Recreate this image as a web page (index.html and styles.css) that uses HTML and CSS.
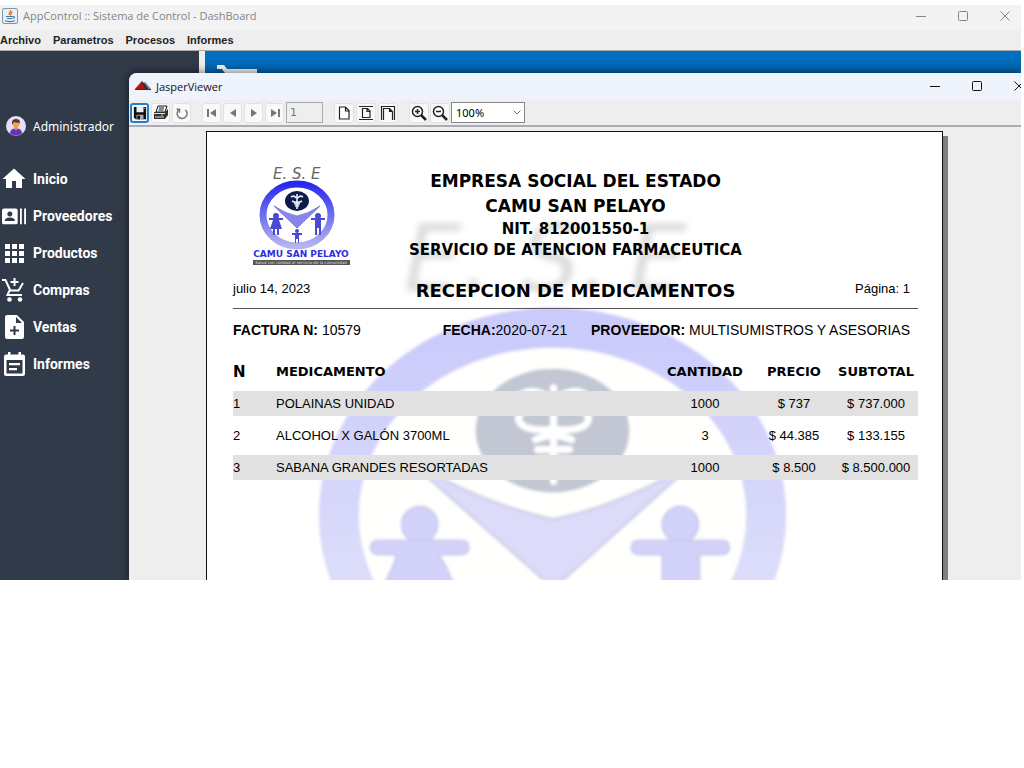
FILE: index.html
```html
<!DOCTYPE html>
<html lang="es">
<head>
<meta charset="utf-8">
<title>AppControl :: Sistema de Control - DashBoard</title>
<link rel="stylesheet" href="styles.css">
</head>
<body>
<div class="app">
  <header class="titlebar">
    <svg class="java-icon" viewBox="0 0 16 16" aria-hidden="true"><rect x=".5" y=".5" width="15" height="15" rx="1.5" fill="#e9f0f5" stroke="#7f98ab"/><path d="M8.500 2c1 2-2.500 2.500-1 5M10.500 4c-2 1-2.500 2-1.500 3.500" fill="none" stroke="#e8762c" stroke-width="1.400"/><path d="M4 8.500h7M5 10.500h5.500M3 12.800q5 1.500 10 0M11 8.500q2.500 0 .5 2" fill="none" stroke="#41789f" stroke-width="1.200"/></svg>
    <h1 class="titlebar-text">AppControl :: Sistema de Control - DashBoard</h1>
    <div class="window-buttons">
      <button aria-label="Minimizar"><svg viewBox="0 0 10 10"><path d="M0 5.500h10"/></svg></button>
      <button aria-label="Maximizar"><svg viewBox="0 0 10 10"><rect x=".5" y=".5" width="9" height="9" rx="1"/></svg></button>
      <button aria-label="Cerrar"><svg viewBox="0 0 10 10"><path d="M.5.5l9 9M9.500.5l-9 9"/></svg></button>
    </div>
  </header>
  <nav class="menubar">
    <button>Archivo</button><button>Parametros</button><button>Procesos</button><button>Informes</button>
  </nav>
  <div class="workspace">
    <div class="dashboard">
      <aside class="sidebar">
        <div class="user">
          <svg viewBox="0 0 20 20" aria-hidden="true"><circle cx="10" cy="10" r="10" fill="#e6dff5"/><path d="M4 17.500q0-5 6-5t6 5q-6 4.500-12 0" fill="#6236b5"/><path d="M8.500 11h3v2.500l-1.500 1-1.500-1z" fill="#e58a45"/><circle cx="10" cy="8" r="3.400" fill="#f7a24f"/><path d="M6 8q-.5-5 4-5t4 5l-1-1.500q-3 .5-5-.8L7 8z" fill="#473a3a"/></svg>
          <span>Administrador</span>
        </div>
        <a href="#inicio"><svg viewBox="0 0 24 24"><path d="M10 21v-7h4v7h6v-9h3.500L12 1.500.5 12H4v9z"/></svg>Inicio</a>
        <a href="#proveedores"><svg viewBox="0 0 26 24"><path fill-rule="evenodd" d="M2 4h13q2 0 2 2v13q0 2-2 2H2q-2 0-2-2V6q0-2 2-2zm6.500 3a2.800 2.800 0 1 0 .01 0zM3 17.500h11q0-4-5.500-4T3 17.500zM19.500 4h2v17h-2zM24 4h2v17h-2z"/></svg>Proveedores</a>
        <a href="#productos"><svg viewBox="0 0 24 24"><path d="M3 3h5v5H3zm7 0h5v5h-5zm7 0h5v5h-5zM3 10h5v5H3zm7 0h5v5h-5zm7 0h5v5h-5zM3 17h5v5H3zm7 0h5v5h-5zm7 0h5v5h-5z"/></svg>Productos</a>
        <a href="#compras"><svg viewBox="0 0 24 24"><path d="M0 2h3.500l4.800 10.500h8.300L21 5" fill="none" stroke="#fff" stroke-width="2"/><path d="M12.500 0v8M8.500 4h8M7.500 12.500l-2 4.500H20" fill="none" stroke="#fff" stroke-width="2"/><circle cx="7.500" cy="21.500" r="2.300"/><circle cx="18" cy="21.500" r="2.300"/></svg>Compras</a>
        <a href="#ventas"><svg viewBox="0 0 24 24"><path fill-rule="evenodd" d="M5 0h10l7 7v15q0 2-2 2H5q-2 0-2-2V2q0-2 2-2zm9 2v6h6zm-2.500 9v3.500H8v2h3.500V20h2v-3.500H17v-2h-3.500V11z"/></svg>Ventas</a>
        <a href="#informes"><svg viewBox="0 0 24 24"><path fill-rule="evenodd" d="M6 0h2.500v2.500h8V0H19v2.500h2q2 0 2 2V22q0 2-2 2H4q-2 0-2-2V4.500q0-2 2-2h2zM4.500 8v13.500h16V8zM7 11h11v2.300H7zm0 5h8v2.300H7z"/></svg>Informes</a>
      </aside>
      <main class="main-area">
        <svg class="main-cart" viewBox="0 0 40 9" aria-hidden="true"><path d="M0 2h6l3 4h29v3" fill="none" stroke="#f2f2f2" stroke-width="4"/></svg>
      </main>
    </div>

    <section class="viewer" aria-label="JasperViewer">
      <header class="viewer-title">
        <svg class="jasper-icon" viewBox="0 0 16 10" aria-hidden="true"><path d="M7 3l3-2 6 7H9z" fill="#777"/><path d="M0 8l6-7 5 7z" fill="#b41414"/><path d="M6 1l1-1 4 5 2 3h-2z" fill="#222"/><path d="M0 8.500h16" stroke="#333"/></svg>
        <h2>JasperViewer</h2>
        <div class="window-buttons">
          <button aria-label="Minimizar"><svg viewBox="0 0 10 10"><path d="M0 5.500h10"/></svg></button>
          <button aria-label="Maximizar"><svg viewBox="0 0 10 10"><rect x=".5" y=".5" width="9" height="9" rx="1"/></svg></button>
          <button aria-label="Cerrar"><svg viewBox="0 0 10 10"><path d="M.5.5l9 9M9.500.5l-9 9"/></svg></button>
        </div>
      </header>
      <div class="toolbar">
        <div class="tool-group">
          <button class="focused" aria-label="Guardar"><svg viewBox="0 0 16 16"><path d="M1 1h14v14H3l-2-2z" fill="#111"/><path d="M4 1h8v6H4z" fill="#eee"/><path d="M4 10h8v5H4z" fill="#aaa"/><path d="M5 11h3v4H5z" fill="#111"/><path d="M13 2h1v1h-1z" fill="#fff"/></svg></button>
          <button aria-label="Imprimir"><svg viewBox="0 0 16 16"><path d="M5 1h9l-2 6H3z" fill="#fff" stroke="#111"/><path d="M6 3h5M5.500 5h5" stroke="#111"/><path d="M1 7h11l3-3v6l-3 4H1z" fill="#333"/><path d="M1 8.500h11M2 12h9" stroke="#ddd"/><path d="M8 10h2" stroke="#dc3"/></svg></button>
          <button aria-label="Recargar"><svg viewBox="0 0 16 16"><path d="M5 4.500a5 5 0 1 0 6.500.3M2.500 4.200h3v3.500" fill="none" stroke="#777" stroke-width="1.500"/></svg></button>
        </div>
        <div class="tool-group">
          <button aria-label="Primera página"><svg viewBox="0 0 16 16"><path d="M3 4h2v8H3zM12 4v8L6 8z" fill="#777"/></svg></button>
          <button aria-label="Página anterior"><svg viewBox="0 0 16 16"><path d="M11 4v8L5 8z" fill="#777"/></svg></button>
          <button aria-label="Página siguiente"><svg viewBox="0 0 16 16"><path d="M5 4v8l6-4z" fill="#777"/></svg></button>
          <button aria-label="Última página"><svg viewBox="0 0 16 16"><path d="M11 4h2v8h-2zM4 4v8l6-4z" fill="#777"/></svg></button>
          <input class="page-number" type="text" value="1" aria-label="Número de página" disabled>
        </div>
        <div class="tool-group fit-group">
          <button aria-label="Tamaño real"><svg viewBox="0 0 16 16"><path d="M3.500 2h6l3.500 3.500V14H3.500zM9.500 2v4H13" fill="#fff" stroke="#222" stroke-width="1.200"/></svg></button>
          <button aria-label="Ajustar página"><svg viewBox="0 0 16 16"><path d="M1 1.500h14M1 14.500h14M4.500 3.500h5l2.500 2.500v6.500H4.500zM9 3.500v3h3" fill="none" stroke="#222" stroke-width="1.200"/></svg></button>
          <button aria-label="Ajustar ancho"><svg viewBox="0 0 16 16"><path d="M1.500 15V1.500h13V15M3.500 15V3.500h6l3 3V15M9.500 3.500v3h3" fill="none" stroke="#222" stroke-width="1.200"/></svg></button>
        </div>
        <div class="tool-group zoom-group">
          <button aria-label="Acercar"><svg viewBox="0 0 16 16"><circle cx="6.500" cy="6.500" r="5" fill="#fff" stroke="#222" stroke-width="1.500"/><path d="M4 6.500h5M6.500 4v5" stroke="#222" stroke-width="1.500"/><path d="M10 10l5 5" stroke="#222" stroke-width="2.500"/></svg></button>
          <button aria-label="Alejar"><svg viewBox="0 0 16 16"><circle cx="6.500" cy="6.500" r="5" fill="#fff" stroke="#222" stroke-width="1.500"/><path d="M4 6.500h5" stroke="#222" stroke-width="1.500"/><path d="M10 10l5 5" stroke="#222" stroke-width="2.500"/></svg></button>
          <span class="zoom-box">
            <select class="zoom-select" aria-label="Zoom"><option>100%</option><option>50%</option><option>200%</option></select>
            <svg class="zoom-arrow" viewBox="0 0 8 5" aria-hidden="true"><path d="M.5.5L4 4 7.500.5"/></svg>
          </span>
        </div>
      </div>

      <div class="canvas">
        <article class="paper">
          <svg class="watermark" viewBox="207 132 736 449" preserveAspectRatio="xMidYMin slice" aria-hidden="true">
            <defs>
              <linearGradient id="pale" x1="0" y1="308" x2="0" y2="720" gradientUnits="userSpaceOnUse"><stop offset="0" stop-color="#c9c9fb"/><stop offset="1" stop-color="#e6e6fa"/></linearGradient>
              <filter id="soft"><feGaussianBlur stdDeviation="1.500"/></filter>
              <filter id="softer"><feGaussianBlur stdDeviation="3"/></filter>
            </defs>
            <g class="watermark-letters" filter="url(#softer)"><text x="404" y="291">E.</text><text x="522" y="291">S.</text><text x="630" y="291">E</text></g>
            <g filter="url(#soft)">
              <ellipse cx="553" cy="516" rx="214" ry="188" fill="#fffffd" stroke="url(#pale)" stroke-width="40"/>
              <path d="M408 460q72 44 146 60 74-16 144-60L554 589z" fill="#dcdcfa" stroke="#d2d2ea" stroke-width="3"/>
              <ellipse cx="553" cy="431" rx="77" ry="62" fill="#c2c7d3"/>
              <g fill="none" stroke="#fff" stroke-width="7" stroke-linecap="round"><path d="M554 388v94"/><path d="M549 398q-14-10-26-4M559 398q14-10 26-4M551 430q-29 2-32-10 0-8 6-8M557 430q29 2 32-10 0-8-6-8M536 440q18-8 36 0M538 450h32M542 460h24"/></g>
              <g fill="#d2d2fa" stroke="#c9c9ee" stroke-width="2"><circle cx="420" cy="525" r="18"/><path d="M379 541h82q8 0 8 7t-8 7h-20q-3 0 4 10l12 26h-75l12-26q4-10 1-10h-16q-8 0-8-7t8-7z"/><circle cx="681" cy="525" r="18"/><path d="M640 541h82q8 0 8 7t-8 7h-22v40h-37v-40h-23q-8 0-8-7t8-7z"/></g>
            </g>
          </svg>
          <header class="report-head">
            <svg class="logo" viewBox="0 0 106 108" role="img" aria-label="E.S.E CAMU SAN PELAYO">
              <defs><linearGradient id="ring" x1="0" y1="0" x2="0" y2="1"><stop offset="0" stop-color="#2929ee"/><stop offset="1" stop-color="#b5b5ef"/></linearGradient></defs>
              <text class="logo-ese" x="25" y="19">E. S. E</text>
              <ellipse cx="49" cy="55" rx="34" ry="31" fill="#fff" stroke="url(#ring)" stroke-width="7"/>
              <path d="M26 46q12 8 23 10 11-2 23-10L49 68z" fill="#8686ee" stroke="#5b5bcc" stroke-width=".7"/>
              <ellipse cx="49" cy="41" rx="12" ry="10" fill="#0c1b4c"/>
              <path d="M49 34v15M43 37q3-2 5 1M55 37q-3-2-5 1M44 41q5 3 10 0M46 44h6M47 46h4" fill="none" stroke="#e8eef3" stroke-width="1.600"/>
              <g fill="#4949d5"><circle cx="28" cy="56" r="3"/><path d="M21 58h14v2h-4l3 9h-3v6h-2v-6h-2v6h-2v-6h-3l3-9h-4z"/><circle cx="70" cy="56" r="3"/><path d="M63 58h14v2h-4v15h-2v-7h-2v7h-2V60h-4z"/><circle cx="49" cy="71" r="2"/><path d="M44 73h10v2h-3v8h-1v-4h-2v4h-1v-8h-3z"/></g>
              <text class="logo-name" x="53" y="97">CAMU SAN PELAYO</text>
              <rect x="5" y="100" width="97" height="5" fill="#555"/>
              <text class="logo-motto" x="53" y="104">Salud con calidad al servicio de la comunidad</text>
            </svg>
            <div class="titles">
              <p class="title-large">EMPRESA SOCIAL DEL ESTADO</p>
              <p class="title-large">CAMU SAN PELAYO</p>
              <p class="title-small">NIT. 812001550-1</p>
              <p class="title-small">SERVICIO DE ATENCION FARMACEUTICA</p>
            </div>
          </header>
          <div class="report-sub">
            <span>julio 14, 2023</span>
            <h3>RECEPCION DE MEDICAMENTOS</h3>
            <span class="page-label">Página: 1</span>
          </div>
          <div class="invoice">
            <p><b>FACTURA N:</b> 10579</p>
            <p class="invoice-date"><b>FECHA:</b>2020-07-21</p>
            <p><b>PROVEEDOR:</b> MULTISUMISTROS Y ASESORIAS</p>
          </div>
          <table class="items">
            <colgroup><col class="col-n"><col><col class="col-qty"><col class="col-price"><col class="col-total"></colgroup>
            <thead><tr><th class="left big">N</th><th class="left">MEDICAMENTO</th><th>CANTIDAD</th><th>PRECIO</th><th>SUBTOTAL</th></tr></thead>
            <tbody>
              <tr><td class="left">1</td><td class="left">POLAINAS UNIDAD</td><td>1000</td><td>$ 737</td><td>$ 737.000</td></tr>
              <tr><td class="left">2</td><td class="left">ALCOHOL X GALÓN 3700ML</td><td>3</td><td>$ 44.385</td><td>$ 133.155</td></tr>
              <tr><td class="left">3</td><td class="left">SABANA GRANDES RESORTADAS</td><td>1000</td><td>$ 8.500</td><td>$ 8.500.000</td></tr>
            </tbody>
          </table>
        </article>
      </div>
    </section>
  </div>
</div>
</body>
</html>
```

FILE: styles.css
```css
* { box-sizing: border-box; }
body { margin: 0; padding: 5px 3px 0 0; background: #fff; color: #000; font-family: "Liberation Sans", Arial, sans-serif; font-size: 13px; }
h1, h2, h3, p { margin: 0; font-weight: normal; }
button { border: 0; padding: 0; background: none; font: inherit; color: inherit; }

.app { background: #eee; overflow: hidden; }
.titlebar { display: flex; align-items: center; gap: 5px; height: 25px; padding: 0 11px 4px 2px; background: #f3f3f3; color: #858585; }
.java-icon { width: 16px; height: 16px; }
.titlebar-text { font-family: "Open Sans", sans-serif; font-size: 11px; }
.window-buttons { display: flex; gap: 32px; margin-left: auto; }
.window-buttons button { display: flex; }
.window-buttons svg { width: 10px; height: 10px; fill: none; stroke: currentColor; overflow: visible; }

.menubar { display: flex; gap: 12px; height: 21px; padding: 0 0 1px; border-bottom: 1px solid #aaa; font-weight: bold; font-size: 11px; color: #222; }

.workspace { display: grid; }
.dashboard, .viewer { position: relative; grid-area: 1 / 1; min-width: 0; }
.dashboard { display: flex; }
.sidebar { flex: none; width: 199px; margin-right: 6px; padding-top: 64px; background: #313a49; color: #fff; }
.user { display: flex; align-items: center; gap: 7px; height: 22px; margin-bottom: 23px; padding-left: 6px; font-family: "Noto Sans", sans-serif; font-size: 12px; }
.user svg { width: 20px; height: 20px; }
.sidebar a { display: flex; align-items: center; gap: 7px; height: 37px; padding-left: 2px; color: #fff; font: bold 14px Roboto, sans-serif; text-decoration: none; }
.sidebar a svg { width: 24px; height: 24px; fill: #fff; }
.main-area { flex: 1; padding: 14px 12px; background: linear-gradient(#0072c6, #0062ab 22px, #0062ab); }
.main-cart { display: block; width: 40px; height: 9px; }

.viewer { margin: 22px 0 0 129px; border-top-left-radius: 8px; overflow: hidden; background: #eee; box-shadow: 0 0 8px 1px rgba(0, 0, 0, .5); }
.viewer-title { display: flex; align-items: center; gap: 5px; height: 27px; padding: 0 0 1px 6px; background: #eff3fb; color: #111; }
.viewer-title h2 { font-family: "Open Sans", sans-serif; font-size: 11px; }
.viewer-title .window-buttons { margin-right: -3px; }
.jasper-icon { width: 16px; height: 10px; }

.toolbar { display: flex; gap: 11px; height: 27px; padding: 2px 1px; border-bottom: 2px solid #a9acb4; }
.tool-group { display: flex; align-items: center; gap: 2px; }
.tool-group button { display: flex; align-items: center; justify-content: center; width: 19px; height: 20px; border: 1px solid #e2e2e2; border-radius: 3px; background: #f9f9f9; }
.tool-group button.focused { border: 2px solid #1f7fd0; }
.tool-group svg { flex: none; width: 16px; height: 16px; }
.tool-group button.focused svg { width: 14px; height: 14px; }
.fit-group button { width: 20px; }
.zoom-group { gap: 1px; }
.zoom-group button { width: 20px; }
.page-number { width: 37px; height: 21px; padding: 0 3px; border: 1px solid #aaa; background: #eee; color: #777; font: 11px "DejaVu Sans", sans-serif; }
.zoom-box { position: relative; display: flex; }
.zoom-select { appearance: none; width: 74px; height: 21px; padding: 0 4px; border: 1px solid #888; border-radius: 0; background: #fff; color: #000; font: 11px "Noto Sans", sans-serif; }
.tool-group .zoom-arrow { position: absolute; right: 4px; top: 8px; width: 8px; height: 5px; fill: none; stroke: #777; pointer-events: none; }

.canvas { padding: 4px 78px 0 77px; }
.paper { position: relative; min-height: 449px; padding: 28px 24px 0 26px; border: 1px solid #111; border-bottom: 0; background: #fff; box-shadow: 5px 5px 0 #808080; }
.paper > * { position: relative; }
.paper .watermark { position: absolute; inset: 0; width: 100%; height: 100%; }
.watermark-letters { fill: #dcdcdc; font: italic 92px "DejaVu Sans", sans-serif; }

.report-head { display: grid; grid-template-columns: 106px 1fr 106px; padding: 0 15px; height: 116px; }
.logo { width: 106px; height: 108px; }
.logo-ese { fill: #666; font: italic 15px "DejaVu Sans", sans-serif; }
.logo-name { fill: #2f2fe0; font: bold 9px "DejaVu Sans", sans-serif; text-anchor: middle; }
.logo-motto { fill: #ddd; font: 4px "DejaVu Sans", sans-serif; text-anchor: middle; }
.titles { display: flex; flex-direction: column; align-items: center; padding-top: 9px; font-family: "DejaVu Sans", sans-serif; white-space: nowrap; }
.titles p { font-weight: bold; }
.title-large { font-size: 17px; line-height: 25px; }
.title-small { font-size: 15px; line-height: 21px; }

.report-sub { display: grid; grid-template-columns: 1fr auto 1fr; align-items: center; height: 33px; padding-bottom: 11px; border-bottom: 1px solid #555; }
.report-sub h3 { font: bold 18px "DejaVu Sans", sans-serif; padding-top: 4px; }
.page-label { text-align: right; padding-right: 8px; }
.invoice { display: flex; justify-content: space-between; padding: 13px 8px 0 0; font-size: 14px; line-height: 16px; }
.invoice-date { margin-left: 58px; }

.items { width: 100%; table-layout: fixed; border-collapse: separate; border-spacing: 0 7px; margin-top: 14px; }
.col-n { width: 43px; }
.col-qty { width: 98px; }
.col-price { width: 80px; }
.col-total { width: 84px; }
.items th, .items td { height: 25px; padding: 0; text-align: center; white-space: nowrap; }
.items th { font: bold 13px "DejaVu Sans", sans-serif; }
.items th.big { font-size: 15px; }
.items .left { text-align: left; }
.items tbody tr:nth-child(odd) td { background: #e1e1e1; }
```
